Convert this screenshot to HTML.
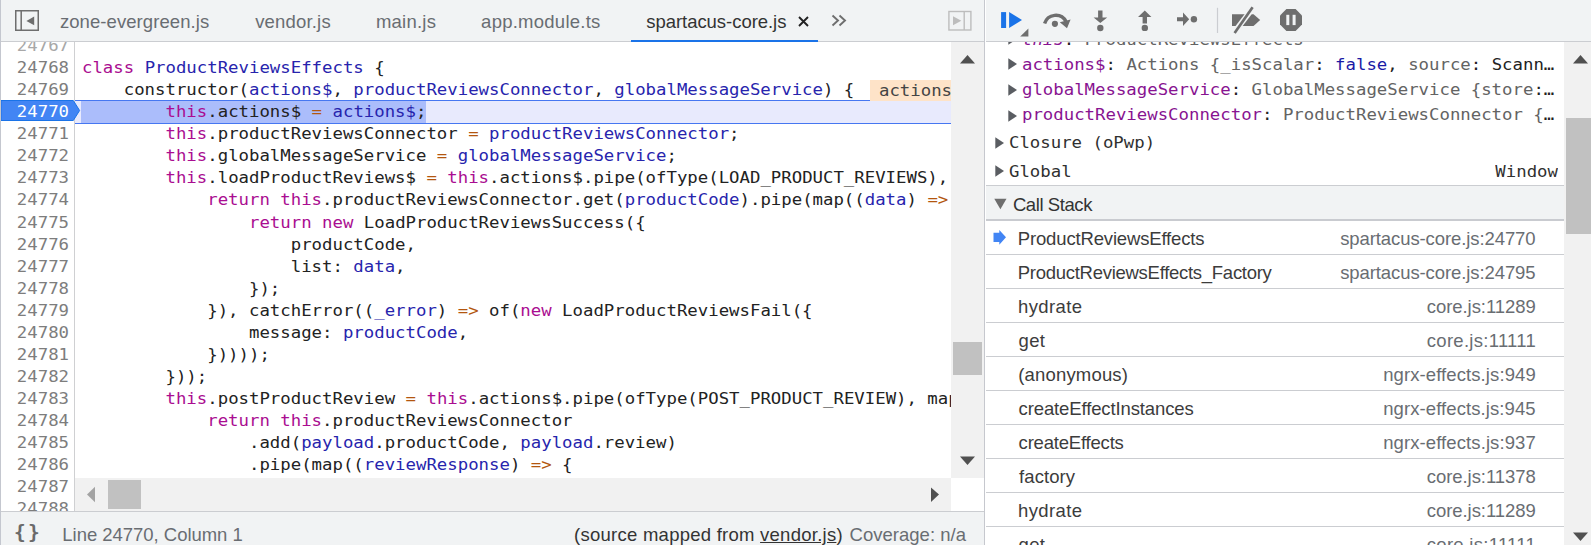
<!DOCTYPE html>
<html><head><meta charset="utf-8"><title>DevTools</title>
<style>
html,body{margin:0;padding:0;}
body{width:1591px;height:545px;overflow:hidden;background:#fff;position:relative;font-family:"Liberation Sans",sans-serif;color:#333;}
div,span{box-sizing:border-box;}
.a{position:absolute;}
.mono{font-family:"DejaVu Sans Mono","Liberation Mono",monospace;font-size:16.6px;white-space:pre;}
.sx{transform:scaleX(1.0446);transform-origin:0 0;}
.sxr{transform:scaleX(1.0446);transform-origin:100% 0;}
.ui{font-family:"Liberation Sans",sans-serif;font-size:18.5px;white-space:nowrap;}
#tabbar{left:0;top:0;width:985px;height:42px;background:#f1f3f4;border-bottom:1px solid #cbcdd1;}
#gutter{left:0;top:42px;width:75px;height:470px;background:#fff;border-right:1px solid #cfd0d2;overflow:hidden;}
.ln{position:absolute;left:0;width:69px;text-align:right;height:22px;line-height:22px;color:#7d7d7d;}
#code{left:75px;top:42px;width:876px;height:436px;overflow:hidden;background:#fff;}
.cl{position:absolute;left:6.5px;height:22px;line-height:22px;color:#222;}
.k{color:#aa0d91}.d{color:#2724ad}.o{color:#b3560f}
</style></head><body>

<div id="tabbar" class="a"></div>
<svg class="a" style="left:14px;top:9px" width="26" height="23" viewBox="0 0 26 23"><rect x="1.75" y="1.75" width="22.5" height="19.5" fill="none" stroke="#6e6e6e" stroke-width="1.5"/><path d="M7.2 1.5V21.5" stroke="#6e6e6e" stroke-width="1.5"/><path d="M12.4 11.9L20.2 7.5V16.3Z" fill="#6e6e6e"/></svg>
<div id="gutter" class="a mono">
<div class="ln sxr" style="top:-6.96px;color:#a8a8a8">24767</div>
<div class="ln sxr" style="top:15.10px">24768</div>
<div class="ln sxr" style="top:37.16px">24769</div>
<div class="ln sxr" style="top:81.28px">24771</div>
<div class="ln sxr" style="top:103.34px">24772</div>
<div class="ln sxr" style="top:125.40px">24773</div>
<div class="ln sxr" style="top:147.46px">24774</div>
<div class="ln sxr" style="top:169.52px">24775</div>
<div class="ln sxr" style="top:191.58px">24776</div>
<div class="ln sxr" style="top:213.64px">24777</div>
<div class="ln sxr" style="top:235.70px">24778</div>
<div class="ln sxr" style="top:257.76px">24779</div>
<div class="ln sxr" style="top:279.82px">24780</div>
<div class="ln sxr" style="top:301.88px">24781</div>
<div class="ln sxr" style="top:323.94px">24782</div>
<div class="ln sxr" style="top:346.00px">24783</div>
<div class="ln sxr" style="top:368.06px">24784</div>
<div class="ln sxr" style="top:390.12px">24785</div>
<div class="ln sxr" style="top:412.18px">24786</div>
<div class="ln sxr" style="top:434.24px">24787</div>
<div class="ln sxr" style="top:456.30px">24788</div>
</div>
<div id="code" class="a mono">
<div class="cl sx" style="top:15.10px"><span class="k">class</span> <span class="d">ProductReviewsEffects</span> {</div>
<div class="cl sx" style="top:37.16px">    constructor(<span class="d">actions$</span>, <span class="d">productReviewsConnector</span>, <span class="d">globalMessageService</span>) {</div>
<div class="cl sx" style="top:59.22px">        <span class="k">this</span>.actions$ <span class="o">=</span> <span class="d">actions$</span>;</div>
<div class="cl sx" style="top:81.28px">        <span class="k">this</span>.productReviewsConnector <span class="o">=</span> <span class="d">productReviewsConnector</span>;</div>
<div class="cl sx" style="top:103.34px">        <span class="k">this</span>.globalMessageService <span class="o">=</span> <span class="d">globalMessageService</span>;</div>
<div class="cl sx" style="top:125.40px">        <span class="k">this</span>.loadProductReviews$ <span class="o">=</span> <span class="k">this</span>.actions$.pipe(ofType(LOAD_PRODUCT_REVIEWS), map(</div>
<div class="cl sx" style="top:147.46px">            <span class="k">return</span> <span class="k">this</span>.productReviewsConnector.get(<span class="d">productCode</span>).pipe(map((<span class="d">data</span>) <span class="o">=&gt;</span> {</div>
<div class="cl sx" style="top:169.52px">                <span class="k">return</span> <span class="k">new</span> LoadProductReviewsSuccess({</div>
<div class="cl sx" style="top:191.58px">                    productCode,</div>
<div class="cl sx" style="top:213.64px">                    list: <span class="d">data</span>,</div>
<div class="cl sx" style="top:235.70px">                });</div>
<div class="cl sx" style="top:257.76px">            }), catchError((<span class="d">_error</span>) <span class="o">=&gt;</span> of(<span class="k">new</span> LoadProductReviewsFail({</div>
<div class="cl sx" style="top:279.82px">                message: <span class="d">productCode</span>,</div>
<div class="cl sx" style="top:301.88px">            }))));</div>
<div class="cl sx" style="top:323.94px">        }));</div>
<div class="cl sx" style="top:346.00px">        <span class="k">this</span>.postProductReview <span class="o">=</span> <span class="k">this</span>.actions$.pipe(ofType(POST_PRODUCT_REVIEW), map(</div>
<div class="cl sx" style="top:368.06px">            <span class="k">return</span> <span class="k">this</span>.productReviewsConnector</div>
<div class="cl sx" style="top:390.12px">                .add(<span class="d">payload</span>.productCode, <span class="d">payload</span>.review)</div>
<div class="cl sx" style="top:412.18px">                .pipe(map((<span class="d">reviewResponse</span>) <span class="o">=&gt;</span> {</div>
</div>
<div class="a" style="left:75px;top:100px;width:876px;height:24px;background:#e8eafd;border-top:1px solid #4677f1;border-bottom:1px solid #4677f1"></div>
<div class="a" style="left:81px;top:101px;width:345px;height:22px;background:#abbdfb"></div>
<div class="a mono cl sx" style="left:81.5px;top:101.22px">        <span class="k">this</span>.actions$ <span class="o">=</span> <span class="d">actions$</span>;</div>
<svg class="a" style="left:0;top:100px" width="82" height="21" viewBox="0 0 82 21"><path d="M1 0.5H73.3L79.6 10.5L73.3 20.5H1Z" fill="#4285f4" stroke="#1a73e8" stroke-width="1"/></svg>
<div class="a mono ln sxr" style="top:101.22px;color:#fff">24770</div>
<div class="a mono" style="left:870px;top:80px;width:81px;height:21px;line-height:21px;background:#fee3c8;color:#444;padding-left:9px;overflow:hidden"><div class="sx">actions$</div></div>
<div class="a" style="left:951px;top:42px;width:33px;height:436px;background:#f1f1f1"></div>
<div class="a" style="left:953px;top:342px;width:29px;height:33px;background:#c1c1c1"></div>
<svg class="a" style="left:951px;top:42px" width="33" height="33" viewBox="0 0 33 33"><path d="M9 21.5L16.5 13L24 21.5Z" fill="#505050"/></svg>
<svg class="a" style="left:951px;top:445px" width="33" height="33" viewBox="0 0 33 33"><path d="M9 11.5L16.5 20L24 11.5Z" fill="#505050"/></svg>
<div class="a" style="left:75px;top:478px;width:876px;height:34px;background:#f1f1f1"></div>
<div class="a" style="left:108px;top:480px;width:33px;height:29px;background:#c1c1c1"></div>
<svg class="a" style="left:75px;top:478px" width="33" height="33" viewBox="0 0 33 33"><path d="M20 8.8L12 16.5L20 24.2Z" fill="#a3a3a3"/></svg>
<svg class="a" style="left:918px;top:478px" width="33" height="33" viewBox="0 0 33 33"><path d="M13 9.5L21 16.5L13 24Z" fill="#505050"/></svg>
<div class="a" style="left:951px;top:478px;width:33px;height:34px;background:#fff"></div>
<div class="a ui" style="left:0;top:511px;width:985px;height:34px;background:#f1f3f4;border-top:1px solid #cbcdd1;color:#5f6368;line-height:45px">
<span class="a" style="left:14px;top:-2.5px;font-weight:bold;font-size:19.5px;font-family:'DejaVu Sans Mono',monospace;color:#6a6a6a;letter-spacing:2.2px">{}</span>
</div>
<div class="a" style="left:0;top:0;width:1px;height:545px;background:#c4c7cf"></div>
<div class="a" style="left:984px;top:0;width:1px;height:545px;background:#c6c8ce"></div><div class="a" style="left:985px;top:0;width:1px;height:545px;background:#fff"></div>
<div class="a" style="left:986px;top:0;width:605px;height:42px;background:#f1f3f4;border-bottom:1px solid #cbcdd1"></div>
<div class="a" style="left:986px;top:42px;width:578px;height:144px;overflow:hidden">
<div class="a mono sx" style="left:36px;top:-14.44px;height:24px;line-height:24px;color:#222"><span style="color:#881391"><i>this</i></span>: <span style="color:#636363">ProductReviewsEffects</span></div>
<svg class="a" style="left:22px;top:-9.4px" width="10" height="12" viewBox="0 0 10 12"><path d="M0.3 0.3L9 6L0.3 11.7Z" fill="#5a5d62"/></svg>
<div class="a mono sx" style="left:36px;top:10.56px;height:24px;line-height:24px;color:#222"><span style="color:#881391">actions$</span>: <span style="color:#636363">Actions {_isScalar</span>: <span style="color:#1a1aa6">false</span>, <span style="color:#636363">source</span>: Scann…</div>
<svg class="a" style="left:22px;top:16.3px" width="10" height="12" viewBox="0 0 10 12"><path d="M0.3 0.3L9 6L0.3 11.7Z" fill="#5a5d62"/></svg>
<div class="a mono sx" style="left:36px;top:35.56px;height:24px;line-height:24px;color:#222"><span style="color:#881391">globalMessageService</span>: <span style="color:#636363">GlobalMessageService {store</span>:…</div>
<svg class="a" style="left:22px;top:42.2px" width="10" height="12" viewBox="0 0 10 12"><path d="M0.3 0.3L9 6L0.3 11.7Z" fill="#5a5d62"/></svg>
<div class="a mono sx" style="left:36px;top:60.56px;height:24px;line-height:24px;color:#222"><span style="color:#881391">productReviewsConnector</span>: <span style="color:#636363">ProductReviewsConnector {</span>…</div>
<svg class="a" style="left:22px;top:67.6px" width="10" height="12" viewBox="0 0 10 12"><path d="M0.3 0.3L9 6L0.3 11.7Z" fill="#5a5d62"/></svg>
</div>
<svg class="a" style="left:995px;top:136.6px" width="10" height="12" viewBox="0 0 10 12"><path d="M0.3 0.3L9 6L0.3 11.7Z" fill="#5a5d62"/></svg>
<svg class="a" style="left:995px;top:165.2px" width="10" height="12" viewBox="0 0 10 12"><path d="M0.3 0.3L9 6L0.3 11.7Z" fill="#5a5d62"/></svg>
<div class="a mono sx" style="left:1009.3px;top:131px;height:24px;line-height:24px;color:#303030">Closure (oPwp)</div>
<div class="a mono sx" style="left:1009.3px;top:160px;height:24px;line-height:24px;color:#303030">Global</div>
<div class="a mono sxr" style="left:1400px;width:158px;text-align:right;top:160px;height:24px;line-height:24px;color:#303030">Window</div>
<div class="a" style="left:986px;top:185px;width:578px;height:36px;background:#f1f3f4;border-top:1px solid #cbcdd1;border-bottom:2px solid #c9cbd0"></div>
<svg class="a" style="left:994px;top:198px" width="13" height="12" viewBox="0 0 13 12"><path d="M0.3 0.8H12.5L6.4 11.2Z" fill="#6e6e6e"/></svg>
<div class="a" style="left:986px;top:254.00px;width:578px;height:1px;background:#cbcdd1"></div>
<div class="a" style="left:986px;top:288.00px;width:578px;height:1px;background:#cbcdd1"></div>
<div class="a" style="left:986px;top:322.00px;width:578px;height:1px;background:#cbcdd1"></div>
<div class="a" style="left:986px;top:356.00px;width:578px;height:1px;background:#cbcdd1"></div>
<div class="a" style="left:986px;top:390.00px;width:578px;height:1px;background:#cbcdd1"></div>
<div class="a" style="left:986px;top:424.00px;width:578px;height:1px;background:#cbcdd1"></div>
<div class="a" style="left:986px;top:458.00px;width:578px;height:1px;background:#cbcdd1"></div>
<div class="a" style="left:986px;top:492.00px;width:578px;height:1px;background:#cbcdd1"></div>
<div class="a" style="left:986px;top:526.00px;width:578px;height:1px;background:#cbcdd1"></div>
<svg class="a" style="left:990px;top:226px" width="20" height="22" viewBox="990 226 20 22"><path d="M993.5 232.7H999.3V229.9L1006 237.3L999.3 244.7V241.9H993.5Z" fill="#4285f4"/></svg>
<div class="a" style="left:631px;top:39.5px;width:187px;height:2.5px;background:#1a73e8"></div>
<svg class="a" style="left:796px;top:14px" width="15" height="15" viewBox="0 0 15 15"><path d="M3 3L12 12M12 3L3 12" stroke="#222" stroke-width="1.9" fill="none"/></svg>
<svg class="a" style="left:830px;top:13px" width="18" height="15" viewBox="0 0 18 15"><path d="M2.5 2.5L8 7.5L2.5 12.5M9.5 2.5L15 7.5L9.5 12.5" stroke="#6e6e6e" stroke-width="1.9" fill="none"/></svg>
<svg class="a" style="left:947px;top:10px" width="26" height="22" viewBox="0 0 26 22"><rect x="1.9" y="1.5" width="22" height="18.5" fill="none" stroke="#bdbdbd" stroke-width="1.4"/><path d="M17.2 1.5V20" stroke="#bdbdbd" stroke-width="1.4"/><path d="M14.3 10.7L6 6.2V15.2Z" fill="#bdbdbd"/></svg>
<svg class="a" style="left:986px;top:0" width="340" height="41" viewBox="986 0 340 41">
<rect x="1001.1" y="12.1" width="5" height="15.9" fill="#1a73e8"/><path d="M1009.1 12.1L1022 20L1009.1 28Z" fill="#1a73e8"/>
<path d="M1028.4 28.5V36.4H1020.2Z" fill="#6e6e6e"/>
<path d="M1044.6 23.6A11.6 11.6 0 0 1 1066 21.5" fill="none" stroke="#6e6e6e" stroke-width="3.4"/><path d="M1059.8 22.2L1070.6 19.6L1067 28.2Z" fill="#6e6e6e"/><circle cx="1054.9" cy="23.8" r="3.1" fill="#6e6e6e"/>
<path d="M1098.1 10.4H1102.5V17.4H1107.2L1100.3 23L1093.6 17.4H1098.1Z" fill="#6e6e6e"/><circle cx="1100.3" cy="28" r="3.2" fill="#6e6e6e"/>
<path d="M1144.8 10.6L1151.4 17H1147V23.6H1142.6V17H1138Z" fill="#6e6e6e"/><circle cx="1144.8" cy="27.9" r="3.2" fill="#6e6e6e"/>
<path d="M1177 17.3H1183V12.6L1189.2 19.2L1183 26V21.2H1177Z" fill="#6e6e6e"/><circle cx="1193.9" cy="19.2" r="3.2" fill="#6e6e6e"/>
<path d="M1217.5 7.8V33" stroke="#cbcdd1" stroke-width="1.2"/>
<path d="M1232 14.2H1253.5L1260.2 20.1L1253.5 26H1232Z" fill="#6e6e6e"/><path d="M1254 6.5L1233 34" stroke="#f1f3f4" stroke-width="5.6"/><path d="M1252.6 7.2L1234.6 33" stroke="#6e6e6e" stroke-width="2.7"/>
<path d="M1286.4 9H1295.6L1302 15.4V24.6L1295.6 31H1286.4L1280 24.6V15.4Z" fill="#6e6e6e"/><rect x="1286.3" y="14.8" width="3" height="10.3" fill="#f1f3f4"/><rect x="1292.6" y="14.8" width="3" height="10.3" fill="#f1f3f4"/>
</svg>
<span class="a ui" style="left:59.90px;top:10.09px;height:24px;line-height:24px;letter-spacing:0.073px;color:#696d72;font-size:18.5px;">zone-evergreen.js</span>
<span class="a ui" style="left:255.20px;top:10.09px;height:24px;line-height:24px;letter-spacing:0.176px;color:#696d72;font-size:18.5px;">vendor.js</span>
<span class="a ui" style="left:375.90px;top:10.09px;height:24px;line-height:24px;letter-spacing:0.242px;color:#696d72;font-size:18.5px;">main.js</span>
<span class="a ui" style="left:481.10px;top:10.09px;height:24px;line-height:24px;letter-spacing:0.253px;color:#696d72;font-size:18.5px;">app.module.ts</span>
<span class="a ui" style="left:646.20px;top:10.09px;height:24px;line-height:24px;letter-spacing:-0.038px;color:#333;font-size:18.5px;">spartacus-core.js</span>
<span class="a ui" style="left:62.30px;top:523.09px;height:24px;line-height:24px;letter-spacing:-0.028px;color:#696d72;font-size:18.5px;">Line 24770, Column 1</span>
<span class="a ui" style="left:574.10px;top:523.09px;height:24px;line-height:24px;letter-spacing:0.251px;color:#333;font-size:18.5px;">(source mapped from <u>vendor.js</u>)</span>
<span class="a ui" style="left:849.50px;top:523.09px;height:24px;line-height:24px;letter-spacing:0.023px;color:#696d72;font-size:18.5px;">Coverage: n/a</span>
<span class="a ui" style="left:1012.90px;top:193.09px;height:24px;line-height:24px;letter-spacing:-0.414px;color:#333;font-size:18.5px;">Call Stack</span>
<span class="a ui" style="left:1017.80px;top:227.09px;height:24px;line-height:24px;letter-spacing:-0.156px;color:#3c3c3c;font-size:18.5px;">ProductReviewsEffects</span>
<span class="a ui" style="left:1340.20px;top:227.09px;height:24px;line-height:24px;letter-spacing:-0.093px;color:#696d72;font-size:18.5px;">spartacus-core.js:24770</span>
<span class="a ui" style="left:1017.80px;top:261.12px;height:24px;line-height:24px;letter-spacing:-0.278px;color:#3c3c3c;font-size:18.5px;">ProductReviewsEffects_Factory</span>
<span class="a ui" style="left:1340.20px;top:261.12px;height:24px;line-height:24px;letter-spacing:-0.093px;color:#696d72;font-size:18.5px;">spartacus-core.js:24795</span>
<span class="a ui" style="left:1018.10px;top:295.15px;height:24px;line-height:24px;letter-spacing:0.364px;color:#3c3c3c;font-size:18.5px;">hydrate</span>
<span class="a ui" style="left:1426.80px;top:295.15px;height:24px;line-height:24px;letter-spacing:-0.068px;color:#696d72;font-size:18.5px;">core.js:11289</span>
<span class="a ui" style="left:1018.60px;top:329.18px;height:24px;line-height:24px;letter-spacing:0.311px;color:#3c3c3c;font-size:18.5px;">get</span>
<span class="a ui" style="left:1426.80px;top:329.18px;height:24px;line-height:24px;letter-spacing:0.284px;color:#696d72;font-size:18.5px;">core.js:11111</span>
<span class="a ui" style="left:1018.20px;top:363.21px;height:24px;line-height:24px;letter-spacing:0.180px;color:#3c3c3c;font-size:18.5px;">(anonymous)</span>
<span class="a ui" style="left:1383.20px;top:363.21px;height:24px;line-height:24px;letter-spacing:0.093px;color:#696d72;font-size:18.5px;">ngrx-effects.js:949</span>
<span class="a ui" style="left:1018.60px;top:397.24px;height:24px;line-height:24px;letter-spacing:-0.121px;color:#3c3c3c;font-size:18.5px;">createEffectInstances</span>
<span class="a ui" style="left:1383.20px;top:397.24px;height:24px;line-height:24px;letter-spacing:0.087px;color:#696d72;font-size:18.5px;">ngrx-effects.js:945</span>
<span class="a ui" style="left:1018.60px;top:431.27px;height:24px;line-height:24px;letter-spacing:-0.198px;color:#3c3c3c;font-size:18.5px;">createEffects</span>
<span class="a ui" style="left:1383.20px;top:431.27px;height:24px;line-height:24px;letter-spacing:0.098px;color:#696d72;font-size:18.5px;">ngrx-effects.js:937</span>
<span class="a ui" style="left:1019.10px;top:465.30px;height:24px;line-height:24px;letter-spacing:0.072px;color:#3c3c3c;font-size:18.5px;">factory</span>
<span class="a ui" style="left:1426.80px;top:465.30px;height:24px;line-height:24px;letter-spacing:-0.068px;color:#696d72;font-size:18.5px;">core.js:11378</span>
<span class="a ui" style="left:1018.10px;top:499.33px;height:24px;line-height:24px;letter-spacing:0.364px;color:#3c3c3c;font-size:18.5px;">hydrate</span>
<span class="a ui" style="left:1426.80px;top:499.33px;height:24px;line-height:24px;letter-spacing:-0.068px;color:#696d72;font-size:18.5px;">core.js:11289</span>
<span class="a ui" style="left:1018.60px;top:533.36px;height:24px;line-height:24px;letter-spacing:0.311px;color:#3c3c3c;font-size:18.5px;">get</span>
<span class="a ui" style="left:1426.80px;top:533.36px;height:24px;line-height:24px;letter-spacing:0.284px;color:#696d72;font-size:18.5px;">core.js:11111</span>
<div class="a" style="left:1564px;top:42px;width:27px;height:503px;background:#f1f1f1"></div>
<div class="a" style="left:1566px;top:118px;width:25px;height:116px;background:#c1c1c1"></div>
<svg class="a" style="left:1564px;top:42px" width="33" height="33" viewBox="0 0 33 33"><path d="M9 21.5L16.5 13L24 21.5Z" fill="#505050"/></svg>
<svg class="a" style="left:1564px;top:518px" width="33" height="33" viewBox="0 0 33 33"><path d="M9 14.5L16.5 23L24 14.5Z" fill="#505050"/></svg>
</body></html>
